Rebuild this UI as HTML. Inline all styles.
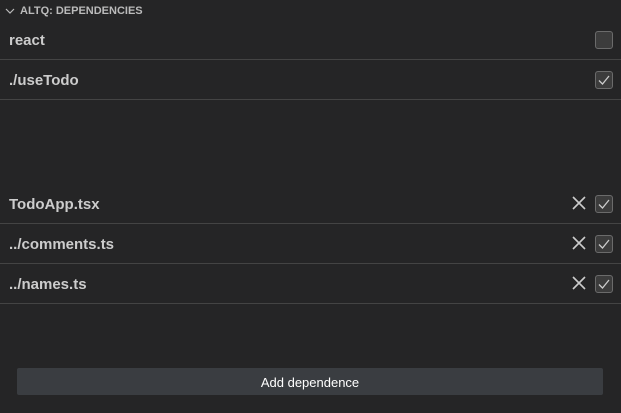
<!DOCTYPE html>
<html><head><style>
html,body{margin:0;padding:0;width:621px;height:413px;background:#252526;overflow:hidden;font-family:"Liberation Sans",sans-serif;}
.hdr{position:absolute;left:0;top:1px;height:20px;width:621px;color:#bbbbbb;font-size:11px;font-weight:bold;line-height:20px;}
.hdr span{position:absolute;left:20px;top:0;}
.row{position:absolute;left:0;width:621px;height:40px;border-bottom:1px solid #444;box-sizing:border-box;}
.row .t{position:absolute;left:9px;top:12px;font-size:15px;font-weight:bold;color:#cccccc;}
.cb{position:absolute;left:595px;top:11px;width:16px;height:16px;border:1px solid #6b6b6b;background:#3c3c3c;border-radius:3px;}
.x{position:absolute;left:572px;top:12px;}
.btn{position:absolute;left:17px;top:368px;width:586px;height:27px;background:#3a3d41;border-radius:2px;color:#ffffff;font-size:13px;text-align:center;line-height:29px;}
</style></head><body>
<div class="hdr"><svg style="position:absolute;left:5px;top:6px" width="10" height="8" viewBox="0 0 10 8"><path d="M1 2 L5 6 L9 2" fill="none" stroke="#bbb" stroke-width="1.2"/></svg><span>ALTQ: DEPENDENCIES</span></div>

<div class="row" style="top:20px"><div class="t">react</div><div class="cb"></div></div>
<div class="row" style="top:60px"><div class="t">./useTodo</div><div class="cb"><svg width="16" height="16" viewBox="0 0 16 16"><path d="M3 8.5 L6.5 12 L13 4" fill="none" stroke="#cccccc" stroke-width="1.3"/></svg></div></div>

<div class="row" style="top:184px"><div class="t">TodoApp.tsx</div><svg class="x" width="14" height="14" viewBox="0 0 14 14"><path d="M1 1 L13 13 M13 1 L1 13" stroke="#cccccc" stroke-width="1.6"/></svg><div class="cb"><svg width="16" height="16" viewBox="0 0 16 16"><path d="M3 8.5 L6.5 12 L13 4" fill="none" stroke="#cccccc" stroke-width="1.3"/></svg></div></div>
<div class="row" style="top:224px"><div class="t">../comments.ts</div><svg class="x" width="14" height="14" viewBox="0 0 14 14"><path d="M1 1 L13 13 M13 1 L1 13" stroke="#cccccc" stroke-width="1.6"/></svg><div class="cb"><svg width="16" height="16" viewBox="0 0 16 16"><path d="M3 8.5 L6.5 12 L13 4" fill="none" stroke="#cccccc" stroke-width="1.3"/></svg></div></div>
<div class="row" style="top:264px"><div class="t">../names.ts</div><svg class="x" width="14" height="14" viewBox="0 0 14 14"><path d="M1 1 L13 13 M13 1 L1 13" stroke="#cccccc" stroke-width="1.6"/></svg><div class="cb"><svg width="16" height="16" viewBox="0 0 16 16"><path d="M3 8.5 L6.5 12 L13 4" fill="none" stroke="#cccccc" stroke-width="1.3"/></svg></div></div>

<div class="btn">Add dependence</div>
</body></html>
